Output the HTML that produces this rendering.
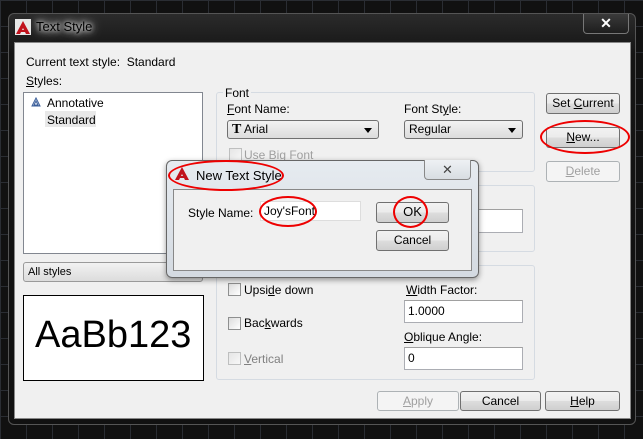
<!DOCTYPE html>
<html><head><meta charset="utf-8"><style>
*{box-sizing:border-box;margin:0;padding:0}
body{width:643px;height:439px;overflow:hidden;background:#111;font-family:"Liberation Sans",sans-serif;font-size:12px;color:#000;position:relative;
background-image:linear-gradient(#2a2d33 1px,transparent 1px),linear-gradient(90deg,#2a2d33 1px,transparent 1px);background-size:26px 26px}
.a{position:absolute}
.t{position:absolute;white-space:nowrap}
.grp{position:absolute;border:1px solid #d5dbe2;border-radius:3px}
.btn{position:absolute;border:1px solid #707070;border-radius:3px;background:linear-gradient(#f2f2f2 0%,#ebebeb 50%,#dddddd 51%,#cfcfcf 100%);text-align:center;font-size:12px;line-height:18px}
.dis{border-color:#adb2b5;color:#a0a0a0;background:#f4f4f4}
.inp{position:absolute;background:#fff;border:1px solid #abadb3;border-top-color:#a0a0a0;padding-left:3px;line-height:18px}
.combo{position:absolute;border:1px solid #707070;border-radius:3px;background:linear-gradient(#f2f2f2,#dcdcdc);line-height:16px;padding-left:4px}
.combo:after{content:"";position:absolute;right:6px;top:7px;border:4px solid transparent;border-top:5px solid #000;border-bottom:0}
.cb{position:absolute;width:13px;height:13px;border:1px solid #8e8f8f;background:linear-gradient(135deg,#dcdcdc,#fff)}
u{text-decoration:underline}
.red{position:absolute;border:2px solid #e00;border-radius:50%}
</style></head><body>
<div class="a" style="left:8px;top:13px;width:628px;height:412px;border-radius:6px;background:linear-gradient(#2b2b2b,#141414 40px,#111);border:1px solid #555"></div>
<div class="a" style="left:15px;top:19px;width:16px;height:16px;background:#e8e8e8"></div>
<svg class="a" style="left:15px;top:20px" width="16" height="15"><path d="M8 1 L15 14 L11 14 L8 8 L5 14 L1 14 Z" fill="#c1121c"/><path d="M4 11 H12" stroke="#c1121c" stroke-width="2"/></svg>
<div class="t" style="left:36px;top:19px;font-size:13px;color:#000;text-shadow:0 0 4px #eee,0 0 8px #ddd,0 0 12px #ccc">Text Style</div>
<div class="a" style="left:583px;top:14px;width:46px;height:20px;border:1px solid #777;border-top:0;border-radius:0 0 4px 4px;background:linear-gradient(#3a3a3a,#1e1e1e);color:#fff;text-align:center;font-weight:bold;font-size:14px;line-height:18px">✕</div>
<div class="a" style="left:14px;top:42px;width:617px;height:377px;background:#f0f0f0;border:1px solid #888"></div>

<div class="t" style="left:26px;top:55px">Current text style:&nbsp; Standard</div>
<div class="t" style="left:26px;top:74px"><u>S</u>tyles:</div>
<div class="a" style="left:23px;top:92px;width:180px;height:162px;background:#fff;border:1px solid #828790"></div>
<svg class="a" style="left:31px;top:97px" width="10" height="10"><path d="M5 1 L9 9 L1 9 Z M5 4 L7 8 L3 8 Z" fill="none" stroke="#3a5e9a" stroke-width="1"/></svg>
<div class="t" style="left:47px;top:96px">Annotative</div>
<div class="a" style="left:45px;top:111px;width:51px;height:16px;background:#e8e8e8"></div>
<div class="t" style="left:47px;top:113px">Standard</div>
<div class="combo" style="left:23px;top:262px;width:180px;height:20px;font-size:11px;line-height:18px;border-color:#9a9a9a">All styles</div>
<div class="a" style="left:23px;top:295px;width:181px;height:86px;background:#fff;border:1px solid #000"></div>
<div class="t" style="left:35px;top:314px;font-size:38px;letter-spacing:0">AaBb123</div>

<div class="grp" style="left:216px;top:92px;width:319px;height:80px"></div>
<div class="t" style="left:223px;top:86px;background:#f0f0f0;padding:0 2px">Font</div>
<div class="t" style="left:227px;top:102px"><u>F</u>ont Name:</div>
<div class="combo" style="left:227px;top:120px;width:152px;height:19px"><span style="font-family:'Liberation Serif',serif;font-weight:bold;font-size:14px">T</span> Arial</div>
<div class="t" style="left:404px;top:102px">Font St<u>y</u>le:</div>
<div class="combo" style="left:404px;top:120px;width:119px;height:19px">Regular</div>
<div class="cb" style="left:229px;top:148px;opacity:.5"></div>
<div class="t" style="left:244px;top:148px;color:#a0a0a0">Use Big Font</div>

<div class="grp" style="left:216px;top:185px;width:319px;height:67px"></div>
<div class="inp" style="left:404px;top:209px;width:119px;height:24px"></div>

<div class="grp" style="left:216px;top:265px;width:319px;height:115px"></div>
<div class="cb" style="left:228px;top:283px"></div>
<div class="t" style="left:244px;top:283px">Upsi<u>d</u>e down</div>
<div class="cb" style="left:228px;top:317px"></div>
<div class="t" style="left:244px;top:316px">Bac<u>k</u>wards</div>
<div class="cb" style="left:228px;top:352px;opacity:.5"></div>
<div class="t" style="left:244px;top:352px;color:#808080"><u>V</u>ertical</div>
<div class="t" style="left:406px;top:283px"><u>W</u>idth Factor:</div>
<div class="inp" style="left:404px;top:300px;width:119px;height:23px;line-height:20px">1.0000</div>
<div class="t" style="left:404px;top:330px"><u>O</u>blique Angle:</div>
<div class="inp" style="left:404px;top:347px;width:119px;height:23px;line-height:20px">0</div>

<div class="btn" style="left:546px;top:93px;width:74px;height:21px">Set <u>C</u>urrent</div>
<div class="btn" style="left:546px;top:127px;width:74px;height:21px"><u>N</u>ew...</div>
<div class="btn dis" style="left:546px;top:161px;width:74px;height:21px"><u>D</u>elete</div>
<div class="btn dis" style="left:377px;top:391px;width:82px;height:20px"><u>A</u>pply</div>
<div class="btn" style="left:460px;top:391px;width:81px;height:20px">Cancel</div>
<div class="btn" style="left:545px;top:391px;width:75px;height:20px"><u>H</u>elp</div>

<div class="a" style="left:166px;top:160px;width:313px;height:118px;border-radius:6px;border:1px solid #666;background:linear-gradient(#e6ebf0,#d4dae1);box-shadow:0 2px 6px rgba(0,0,0,.4)"></div>
<svg class="a" style="left:174px;top:166px" width="16" height="15"><path d="M8 1 L15 14 L11 14 L8 8 L5 14 L1 14 Z" fill="#c1121c"/><path d="M4 11 H12" stroke="#c1121c" stroke-width="2"/></svg>
<div class="t" style="left:196px;top:168px;font-size:13px">New Text Style</div>
<div class="a" style="left:424px;top:160px;width:47px;height:20px;border:1px solid #888;border-top:0;border-radius:0 0 4px 4px;background:linear-gradient(#eef1f4,#d8dde2);color:#444;text-align:center;font-size:13px;line-height:19px">✕</div>
<div class="a" style="left:173px;top:189px;width:299px;height:82px;background:#f0f0f0;border:1px solid #888"></div>
<div class="t" style="left:188px;top:206px">Style Name:</div>
<div class="inp" style="left:260px;top:201px;width:101px;height:20px;border-color:#ddd">Joy'sFont</div>
<div class="btn" style="left:376px;top:202px;width:73px;height:21px;font-size:13px">OK</div>
<div class="btn" style="left:376px;top:230px;width:73px;height:21px">Cancel</div>

<div class="red" style="left:168px;top:160px;width:116px;height:31px"></div>
<div class="red" style="left:259px;top:196px;width:58px;height:31px"></div>
<div class="red" style="left:393px;top:196px;width:35px;height:32px"></div>
<div class="red" style="left:540px;top:120px;width:90px;height:34px"></div>
</body></html>
